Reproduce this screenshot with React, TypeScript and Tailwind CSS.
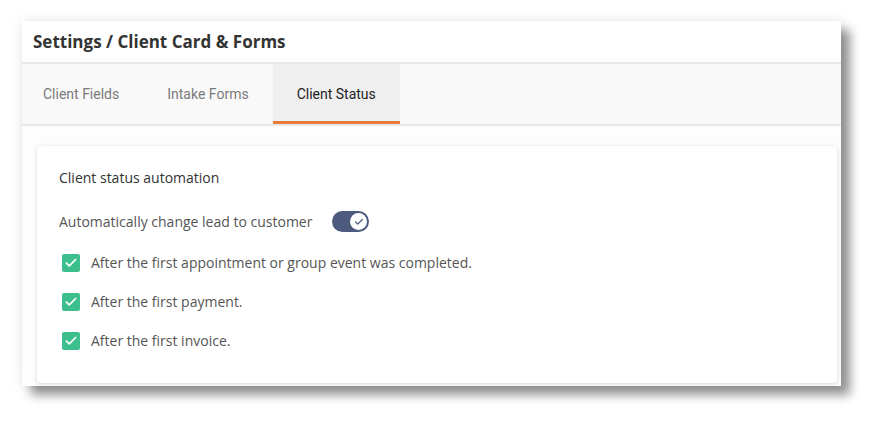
import { Check } from "lucide-react";

const tabs = [
  { label: "Client Fields", active: false },
  { label: "Intake Forms", active: false },
  { label: "Client Status", active: true },
];

const rules = [
  "After the first appointment or group event was completed.",
  "After the first payment.",
  "After the first invoice.",
];

export default function App() {
  return (
    <div className="h-[428px] w-[883px] bg-white pl-[22px] pt-[21px]">
      <div className="flex h-[365px] w-[819px] flex-col overflow-hidden bg-[#fdfdfd] shadow-[9px_9px_10px_rgba(0,0,0,0.42),0_0_12px_rgba(0,0,0,0.1)]">
        <header className="flex h-[41px] shrink-0 items-center bg-white pl-[11px]">
          <h1 className="font-['Open_Sans',sans-serif] text-[17px] font-bold text-[#333]">Settings / Client Card &amp; Forms</h1>
        </header>
        <nav className="flex h-[64px] shrink-0 border-y-2 border-[#e8e8e8] bg-[#f9f9f9]">
          <div className="-ml-[3px] flex">
            {tabs.map((tab) => (
              <button
                key={tab.label}
                className={
                  tab.active
                    ? "flex items-center border-b-[3px] border-[#e67a36] bg-[#efefef] px-6 pt-[3px] font-['Roboto',sans-serif] text-[14px] text-[#222]"
                    : "flex items-center border-b-[3px] border-transparent px-6 pt-[3px] font-['Roboto',sans-serif] text-[14px] text-[#7a7a7a]"
                }
              >
                {tab.label}
              </button>
            ))}
          </div>
        </nav>
        <section className="pl-[15px] pt-[20px]">
          <article className="w-[800px] rounded-[4px] bg-white px-[22px] pb-[32px] pt-[22px] font-['Open_Sans',sans-serif] shadow-[0_1px_4px_rgba(0,0,0,0.16)]">
            <h2 className="text-[14px] font-medium leading-[20px] text-[#333]">Client status automation</h2>
            <div className="mt-[23px] flex items-center">
              <span className="text-[14px] leading-[20px] text-[#555]">Automatically change lead to customer</span>
              <div className="ml-[20px] flex h-[21px] w-[37px] items-center justify-end rounded-full bg-[#4b5a7d] pr-[2px]">
                <div className="flex h-[17px] w-[17px] items-center justify-center rounded-full bg-white">
                  <Check className="h-[10px] w-[10px] text-[#4b5a7d]" strokeWidth={3} />
                </div>
              </div>
            </div>
            <ul className="mt-[21px] space-y-[19px] pl-[3px]">
              {rules.map((rule) => (
                <li key={rule} className="flex items-center">
                  <span className="flex h-[18px] w-[18px] items-center justify-center rounded-[2px] bg-[#3dbf8d]">
                    <Check className="h-[14px] w-[14px] text-white" strokeWidth={3} />
                  </span>
                  <span className="ml-[11px] text-[14px] leading-[20px] text-[#555]">{rule}</span>
                </li>
              ))}
            </ul>
          </article>
        </section>
      </div>
    </div>
  );
}
